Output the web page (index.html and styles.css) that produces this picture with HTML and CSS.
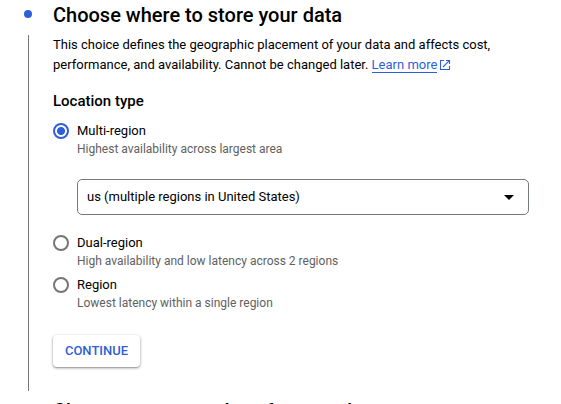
FILE: index.html
```
<!DOCTYPE html>
<html lang="en">
<head>
<meta charset="utf-8">
<title>Choose where to store your data</title>
<link rel="stylesheet" href="styles.css">
</head>
<body>
<main class="stepper">
  <section class="step">
    <div class="rail"><span class="dot"></span><span class="line"></span></div>
    <div class="content">
      <h2 class="title">Choose where to store your data</h2>
      <p class="intro">This choice defines the geographic placement of your data and affects cost,<br>performance, and availability. Cannot be changed later. <a class="link" href="#">Learn more</a><svg class="external" viewBox="0 0 12 12" width="12" height="12"><path d="M5 1.5H1.5v9h9V7M7 1.5h3.5V5M10.3 1.7 4 8"/></svg></p>
      <h3 class="subtitle">Location type</h3>
      <div class="option">
        <span class="radio checked"></span>
        <div><div class="label">Multi-region</div><div class="hint">Highest availability across largest area</div></div>
      </div>
      <div class="select"><span>us (multiple regions in United States)</span><svg viewBox="0 0 10 5" width="10" height="5"><path d="M0 0h10L5 5z"/></svg></div>
      <div class="option">
        <span class="radio"></span>
        <div><div class="label">Dual-region</div><div class="hint">High availability and low latency across 2 regions</div></div>
      </div>
      <div class="option">
        <span class="radio"></span>
        <div><div class="label">Region</div><div class="hint">Lowest latency within a single region</div></div>
      </div>
      <button class="continue" type="button">CONTINUE</button>
    </div>
  </section>
  <section class="step next">
    <div class="rail"></div>
    <h2 class="title">Choose a storage class for your data</h2>
  </section>
</main>
</body>
</html>
```
FILE: styles.css
```
* { box-sizing: border-box; }
body {
  margin: 0;
  height: 404px;
  overflow: hidden;
  background: #fff;
  color: #000;
  font: 400 13px/20px Roboto, sans-serif;
}
.step {
  display: grid;
  grid-template-columns: 33px 1fr;
  height: 395px;
  padding: 3px 0 4px 20px;
}
.next { padding-top: 4px; }
.rail {
  display: flex;
  flex-direction: column;
  align-items: center;
  width: 17px;
  padding-top: 7px;
}
.dot {
  width: 8px;
  height: 8px;
  margin-right: 1px;
  border-radius: 50%;
  background: #2f5fd8;
}
.line {
  flex: 1;
  width: 1px;
  margin-top: 17px;
  background: #757575;
}
.title {
  margin: 0;
  font-size: 20px;
  line-height: 24px;
  font-weight: 500;
}
.intro { margin: 8px 0 0; white-space: nowrap; }
.link {
  color: #2f5fd8;
  text-decoration: none;
  border-bottom: 1px solid #2f5fd8;
}
.external {
  margin-left: 2px;
  vertical-align: -2px;
  fill: none;
  stroke: #2f5fd8;
  stroke-width: 1.1;
}
.subtitle {
  margin: 16px 0 10px;
  font-size: 15px;
  line-height: 20px;
  font-weight: 500;
}
.option {
  display: flex;
  gap: 8px;
  height: 42px;
}
.radio {
  flex: none;
  width: 16px;
  height: 16px;
  margin-top: 2px;
  border: 2px solid #757575;
  border-radius: 50%;
}
.checked {
  border-color: #2f5fd8;
  background: radial-gradient(circle, #2f5fd8 3.6px, transparent 4.4px);
}
.hint {
  color: #616161;
  font-size: 12px;
  line-height: 16px;
}
.select {
  display: flex;
  align-items: center;
  justify-content: space-between;
  width: 452px;
  height: 36px;
  margin: 16px 0 18px 24px;
  padding: 0 14px 0 9px;
  border: 1px solid #757980;
  border-radius: 5px;
}
.continue {
  display: block;
  width: 87px;
  height: 32px;
  margin-top: 18px;
  padding: 0;
  border: 0;
  border-radius: 4px;
  background: #fff;
  box-shadow: 0 1px 3px rgba(0, 0, 0, .4), 0 1px 1px rgba(0, 0, 0, .12);
  color: #2f5fd8;
  font: 500 13px/32px Roboto, sans-serif;
}
```
